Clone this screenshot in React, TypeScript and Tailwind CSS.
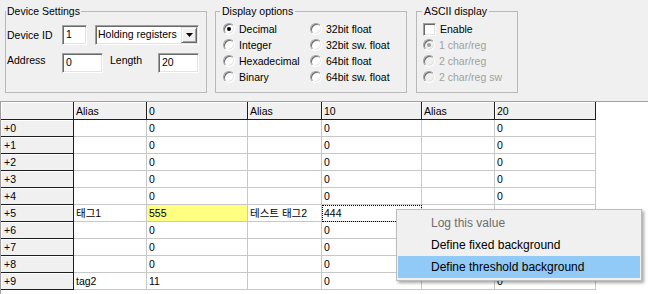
import type { ReactNode } from "react";

const sunken =
  "border border-t-[#a0a0a0] border-l-[#a0a0a0] border-r-white border-b-white shadow-[inset_1px_1px_0_#696969,inset_-1px_-1px_0_#e3e3e3] bg-white";

const colWidths = [73, 101, 74, 100, 73, 101];
const colHeaders = ["Alias", "0", "Alias", "10", "Alias", "20"];

type Cell = { text?: string; yellow?: boolean; focus?: boolean };

const rows: Cell[][] = Array.from({ length: 10 }, (_, i) => {
  const r: Cell[] = [{}, { text: "0" }, {}, { text: "0" }, {}, { text: "0" }];
  if (i === 5) {
    r[0] = { text: "태그1" };
    r[1] = { text: "555", yellow: true };
    r[2] = { text: "테스트 태그2" };
    r[3] = { text: "444", focus: true };
  }
  if (i === 9) {
    r[0] = { text: "tag2" };
    r[1] = { text: "11" };
  }
  return r;
});

function Group({
  title,
  width,
  legendClass,
  children,
}: {
  title: string;
  width: string;
  legendClass: string;
  children: ReactNode;
}) {
  return (
    <fieldset className={`${width} h-[89px] border border-[#b8b8b8] px-0`}>
      <legend className={`${legendClass} text-[10.5px] leading-[14px] text-black`}>
        {title}
      </legend>
      {children}
    </fieldset>
  );
}

function Radio({
  label,
  checked,
  disabled,
}: {
  label: string;
  checked?: boolean;
  disabled?: boolean;
}) {
  return (
    <div className="flex h-[16px] items-center">
      <span
        className={`flex h-[12px] w-[12px] items-center justify-center rounded-full border border-t-[#a0a0a0] border-l-[#a0a0a0] border-r-white border-b-white shadow-[inset_1px_1px_0_#696969,inset_-1px_-1px_0_#e3e3e3] ${
          disabled ? "bg-[#f0f0f0]" : "bg-white"
        }`}
      >
        {checked ? (
          <span
            className={`h-[4px] w-[4px] rounded-full ${
              disabled ? "bg-[#a0a0a0]" : "bg-black"
            }`}
          />
        ) : null}
      </span>
      <span
        className={`ml-[4px] text-[10.5px] leading-[14px] ${
          disabled ? "text-[#a0a0a0]" : "text-black"
        }`}
      >
        {label}
      </span>
    </div>
  );
}

export default function App() {
  return (
    <div className="relative h-[294px] w-[648px] overflow-hidden bg-[#f0f0f0] font-['Liberation_Sans','Noto_Sans_CJK_KR',sans-serif] text-black">
      {/* settings strip */}
      <div className="flex h-[101px] items-start pl-[5px] pt-[4px]">
        <Group title="Device Settings" width="w-[202px]" legendClass="ml-0 px-[1px]">
          <div className="flex flex-col pl-[1px] pt-[7px]">
            <div className="flex h-[20px] items-center">
              <span className="w-[55px] text-[10.5px] leading-[14px]">Device ID</span>
              <div className={`${sunken} flex h-[20px] w-[25px] items-center pl-[3px] text-[10.5px]`}>
                1
              </div>
              <div className={`${sunken} ml-[8px] flex h-[20px] w-[104px] items-center pl-[2px] pr-[1px] text-[10.5px]`}>
                <span className="flex-1 truncate">Holding registers</span>
                <span className="flex h-[16px] w-[16px] items-center justify-center border border-t-[#e3e3e3] border-l-[#e3e3e3] border-r-[#696969] border-b-[#696969] bg-[#f0f0f0] shadow-[inset_1px_1px_0_#fff,inset_-1px_-1px_0_#a0a0a0]">
                  <svg width="7" height="4" viewBox="0 0 7 4">
                    <path d="M0 0h7L3.5 4z" fill="#000" />
                  </svg>
                </span>
              </div>
            </div>
            <div className="mt-[8px] flex h-[20px] items-start">
              <span className="w-[55px] text-[10.5px] leading-[14px]">Address</span>
              <div className={`${sunken} flex h-[20px] w-[41px] items-center pl-[3px] text-[10.5px]`}>
                0
              </div>
              <span className="ml-[7px] w-[48px] text-[10.5px] leading-[14px]">Length</span>
              <div className={`${sunken} flex h-[20px] w-[41px] items-center pl-[3px] text-[10.5px]`}>
                20
              </div>
            </div>
          </div>
        </Group>

        <div className="w-[8px]" />

        <Group title="Display options" width="w-[192px]" legendClass="ml-[4px] px-[2px]">
          <div className="grid grid-flow-col grid-rows-4 grid-cols-[87px_auto] pl-[7px] pt-[3px]">
            <Radio label="Decimal" checked />
            <Radio label="Integer" />
            <Radio label="Hexadecimal" />
            <Radio label="Binary" />
            <Radio label="32bit float" />
            <Radio label="32bit sw. float" />
            <Radio label="64bit float" />
            <Radio label="64bit sw. float" />
          </div>
        </Group>

        <div className="w-[9px]" />

        <Group title="ASCII display" width="w-[102px]" legendClass="ml-[5px] px-[2px]">
          <div className="flex flex-col pl-[6px] pt-[3px]">
            <div className="flex h-[16px] items-center">
              <span className={`${sunken} h-[13px] w-[13px]`} />
              <span className="ml-[4px] text-[10.5px] leading-[14px]">Enable</span>
            </div>
            <Radio label="1 char/reg" checked disabled />
            <Radio label="2 char/reg" disabled />
            <Radio label="2 char/reg sw" disabled />
          </div>
        </Group>
      </div>

      {/* register grid */}
      <div className="h-[193px] border-l border-t border-[#a0a0a0] bg-white text-[10.5px] leading-[14px]">
        <div className="flex h-[18px]">
          <div className="h-full w-[73px] border-b border-r border-[#1e1e1e] bg-[#f0f0f0] shadow-[inset_1px_1px_0_#fff]" />
          {colHeaders.map((h, i) => (
            <div
              key={i}
              style={{ width: colWidths[i] }}
              className="flex h-full items-center border-b border-r border-[#1e1e1e] bg-[#f0f0f0] pl-[2px] shadow-[inset_1px_1px_0_#fff]"
            >
              {h}
            </div>
          ))}
        </div>
        {rows.map((row, ri) => (
          <div key={ri} className="flex h-[17px]">
            <div className="flex h-full w-[73px] items-center border-b border-r border-[#1e1e1e] bg-[#f0f0f0] pl-[3px] shadow-[inset_1px_1px_0_#fff]">
              +{ri}
            </div>
            {row.map((c, ci) => (
              <div
                key={ci}
                style={{ width: colWidths[ci] }}
                className={`flex h-full items-center border-b border-r border-[#c8c8c8] pl-[2px] ${
                  c.yellow ? "bg-[#ffff80]" : ""
                } ${c.focus ? "outline-1 -outline-offset-1 outline-dotted outline-black" : ""}`}
              >
                {c.text}
              </div>
            ))}
          </div>
        ))}
      </div>

      {/* context menu */}
      <div className="absolute left-[396px] top-[209px] w-[246px] border border-[#bcbcbc] bg-[#f0f0f0] px-[1px] py-[2px] text-[12px] shadow-[2px_2px_3px_rgba(0,0,0,0.35)]">
        <div className="flex h-[22px] items-center pl-[33px] text-[#6d6d6d]">Log this value</div>
        <div className="flex h-[22px] items-center pl-[33px]">Define fixed background</div>
        <div className="flex h-[22px] items-center bg-[#91c9f7] pl-[33px]">Define threshold background</div>
      </div>
    </div>
  );
}
